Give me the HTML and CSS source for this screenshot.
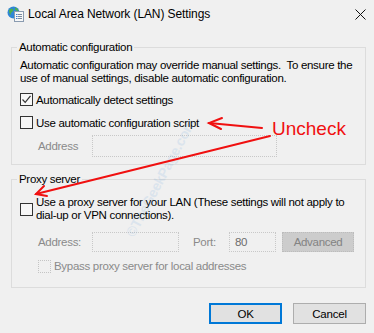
FILE: index.html
```html
<!DOCTYPE html>
<html lang="en">
<head>
    <meta charset="UTF-8">
    <meta name="viewport" content="width=device-width, initial-scale=1.0">
    <title>Local Area Network (LAN) Settings</title>
    <link rel="stylesheet" href="styles.css">
</head>
<body>
    <div class="window">
        <div class="titlebar">
            <svg class="app-icon" width="17" height="16" viewBox="0 0 17 16">
                <circle cx="6.5" cy="6.5" r="6" fill="#2f86d6"/>
                <path d="M2 4 Q4 2 6 3 Q7 5 5 6 Q3 7 4 9 Q2 8 2 4 Z" fill="#4caf50"/>
                <path d="M8 1.5 Q11 2 11.5 5 Q9 5 8 3.5 Z" fill="#4caf50"/>
                <rect x="7.5" y="5.5" width="9" height="10" fill="#f7f7f7" stroke="#8a9bb0"/>
                <rect x="9" y="8" width="1.5" height="1" fill="#3a7bd5"/>
                <rect x="11" y="8" width="4" height="1" fill="#7a8ba0"/>
                <rect x="9" y="10" width="1.5" height="1" fill="#3a7bd5"/>
                <rect x="11" y="10" width="4" height="1" fill="#7a8ba0"/>
                <rect x="9" y="12" width="1.5" height="1" fill="#3a7bd5"/>
                <rect x="11" y="12" width="4" height="1" fill="#7a8ba0"/>
            </svg>
            <span class="title-text">Local Area Network (LAN) Settings</span>
            <svg class="close-icon" width="11" height="11" viewBox="0 0 11 11">
                <path d="M0.5 0.5 L10.5 10.5 M10.5 0.5 L0.5 10.5" stroke="#111" stroke-width="1"/>
            </svg>
        </div>

        <div class="dialog-body">
            <fieldset class="group group-auto">
                <legend>Automatic configuration</legend>
                <p class="note">Automatic configuration may override manual settings.&nbsp; To ensure the use of manual settings, disable automatic configuration.</p>
                <div class="check-row detect-row">
                    <span class="checkbox">
                        <svg width="11" height="11" viewBox="0 0 11 11"><path d="M1.5 5.5 L4.2 8.3 L9.5 1.8" fill="none" stroke="#333" stroke-width="1.2"/></svg>
                    </span>
                    <span>Automatically detect settings</span>
                </div>
                <div class="check-row">
                    <span class="checkbox"></span>
                    <span>Use automatic configuration script</span>
                </div>
                <div class="field-row indent">
                    <span class="muted label-address">Address</span>
                    <span class="textbox textbox-script"></span>
                </div>
            </fieldset>

            <fieldset class="group group-proxy">
                <legend>Proxy server</legend>
                <div class="check-row proxy-row">
                    <span class="checkbox"></span>
                    <span>Use a proxy server for your LAN (These settings will not apply to dial-up or VPN connections).</span>
                </div>
                <div class="proxy-fields indent">
                    <span class="muted">Address:</span>
                    <span class="textbox"></span>
                    <span class="muted label-port">Port:</span>
                    <span class="textbox textbox-port">80</span>
                    <span class="btn-disabled">Advanced</span>
                </div>
                <div class="check-row bypass-row indent">
                    <span class="checkbox checkbox-disabled"></span>
                    <span class="muted">Bypass proxy server for local addresses</span>
                </div>
            </fieldset>

            <div class="button-row">
                <button class="btn btn-default">OK</button>
                <button class="btn">Cancel</button>
            </div>
        </div>

        <!-- annotation overlay -->
        <span class="watermark">&copy;TheGeekPage.com</span>
        <svg class="arrows" width="374" height="333" viewBox="0 0 374 333">
            <g stroke="#f01010" stroke-width="2" fill="none" stroke-linecap="round">
                <path d="M262 128 L209 123"/>
                <path d="M222 118 L209 123 L221 129"/>
                <path d="M270 136 L36 194"/>
                <path d="M44 186 L36 194 L47 196"/>
            </g>
        </svg>
        <span class="uncheck">Uncheck</span>
    </div>
</body>
</html>
```

FILE: styles.css
```css
body {
    margin: 0;
    padding: 0;
    font-family: "Liberation Sans", Arial, sans-serif;
    font-size: 11.5px;
    letter-spacing: -0.3px;
    color: #000;
    background-color: #f0f0f0;
}

.window {
    position: relative;
    width: 374px;
    height: 333px;
    overflow: hidden;
    background-color: #f0f0f0;
}

/* Title bar */
.titlebar {
    display: flex;
    align-items: center;
    height: 28px;
    padding: 0 8px 0 7px;
}

.app-icon {
    margin-right: 4px;
}

.title-text {
    font-size: 12px;
    letter-spacing: -0.1px;
}

.close-icon {
    margin-left: auto;
}

/* Dialog body */
.dialog-body {
    padding: 0 8px 0 11px;
}

.group {
    min-width: 0;
    margin: 0;
    padding: 0 8px;
    border: 1px solid #dcdcdc;
}

.group legend {
    padding: 0 2px;
    margin-left: -3px;
    line-height: 14px;
}

.group-auto {
    margin-top: 12px;
    padding-bottom: 6px;
}

.group-proxy {
    margin-top: 7px;
    padding-bottom: 10px;
}

.note {
    margin: 5px 0 0;
    line-height: 13px;
}

.check-row {
    display: flex;
    align-items: center;
    height: 23px;
}

.detect-row {
    margin-top: 3px;
}

.checkbox {
    display: flex;
    align-items: center;
    justify-content: center;
    width: 11px;
    height: 11px;
    margin-right: 3px;
    border: 1px solid #333;
    background-color: #f7f7f7;
    flex-shrink: 0;
}

.checkbox-disabled {
    border: 1px dotted #c4c4c4;
}

.indent {
    padding-left: 18px;
}

.field-row {
    display: flex;
    align-items: center;
    height: 24px;
}

.muted {
    color: #8a8a8a;
}

.label-address {
    width: 54px;
}

.textbox {
    box-sizing: border-box;
    height: 22px;
    border: 1px dotted #c8c8c8;
    background-color: #f0f0f0;
}

.textbox-script {
    width: 185px;
}

/* Proxy group */
.proxy-row {
    height: 26px;
    margin-top: 10px;
    line-height: 13px;
}

.proxy-fields {
    display: grid;
    grid-template-columns: 54px 87px 50px 47px 78px;
    align-items: center;
    height: 26px;
    margin-top: 7px;
}

.proxy-fields .textbox {
    height: 20px;
}

.label-port {
    padding-left: 14px;
}

.textbox-port {
    padding-left: 5px;
    line-height: 18px;
    color: #6d6d6d;
}

.btn-disabled {
    box-sizing: border-box;
    height: 20px;
    margin-left: 6px;
    border: 1px dotted #bcbcbc;
    background-color: #cccccc;
    color: #838383;
    text-align: center;
    line-height: 18px;
}

.bypass-row {
    height: 22px;
}

.bypass-row .checkbox {
    background-color: #f0f0f0;
}

/* Buttons */
.button-row {
    display: flex;
    justify-content: flex-end;
    margin-top: 15px;
}

.btn {
    box-sizing: border-box;
    width: 73px;
    height: 21px;
    margin-left: 11px;
    padding: 0;
    border: 1px solid #adadad;
    background-color: #e1e1e1;
    font-family: "Liberation Sans", Arial, sans-serif;
    font-size: 11.5px;
    letter-spacing: -0.2px;
    color: #000;
}

.btn-default {
    border: 2px solid #0078d7;
}

/* Annotation overlay */
.arrows {
    position: absolute;
    left: 0;
    top: 0;
    pointer-events: none;
}

.uncheck {
    position: absolute;
    left: 272px;
    top: 118px;
    font-size: 19px;
    letter-spacing: 0;
    color: #f01010;
}

.watermark {
    position: absolute;
    left: 95px;
    top: 170px;
    font-size: 14px;
    font-weight: bold;
    color: #4a90d9;
    opacity: 0.12;
    transform: rotate(-62deg);
    white-space: nowrap;
    pointer-events: none;
}
```
